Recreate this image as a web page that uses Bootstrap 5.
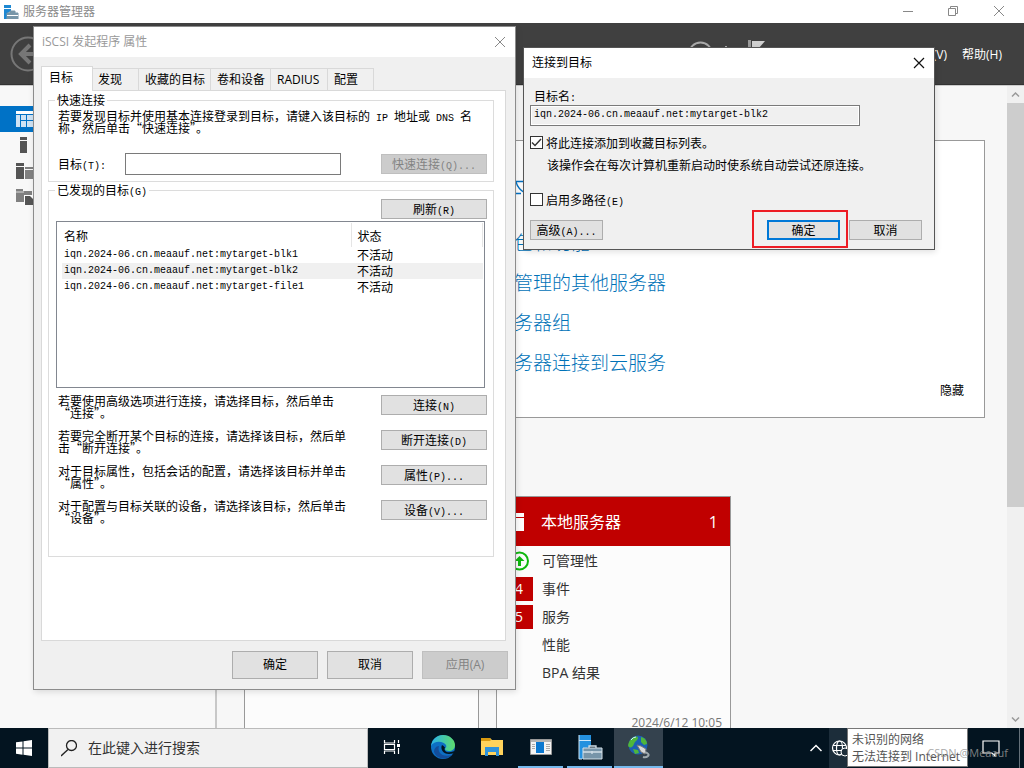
<!DOCTYPE html>
<html lang="zh-CN">
<head>
<meta charset="utf-8">
<meta name="viewport" content="width=device-width, initial-scale=1">
<title>服务器管理器</title>
<link href="https://cdn.jsdelivr.net/npm/bootstrap@5.3.0/dist/css/bootstrap.min.css" rel="stylesheet">
<style>
  body { font: 12px/16px "Open Sans", "Noto Sans CJK SC", sans-serif; color: #000; background: #f7f7f7; }
  .desktop { height: 100vh; min-height: 480px; }
  .song { font-family: "Noto Sans CJK SC", sans-serif; line-height: 12px; }
  .half { font-family: "Liberation Mono", monospace; font-size: 10px; white-space: pre; }
  span.half { line-height: 0; }
  .plain-btn { border: 0; background: none; padding: 0; line-height: 0; color: inherit; }

  /* Server manager window */
  .app-title { height: 23px; background: #fff; color: #8a8a8a; }
  .app-head { height: 62px; background: #404040; color: #fff; border-bottom: 1px solid #333; }
  .app-head a { color: #fff; text-decoration: none; }
  .head-menu { gap: 15px; margin: 2px 22px 0 168px; }
  .app-side { width: 217px; background: #f8f8f8; border-right: 2px solid #c8c8c8; border-top: 1px solid #ccc; padding-top: 20px; }
  .side-item { height: 26px; padding-left: 16px; }
  .side-item.on { background: #0072c6; }
  .app-content { border-top: 1px solid #ccc; padding: 54px 22px 0 27px; background: #f7f7f7; }
  .welcome { border: 1px solid #999; background: #fff; padding: 21px 20px 17px 269px; }
  .welcome a { color: #0072b8; text-decoration: none; font: 300 19px/40px "Noto Sans CJK SC", sans-serif; white-space: nowrap; }
  .welcome a.first { height: 60px; }
  .welcome a.hide-link { font: 12px/16px "Noto Sans CJK SC", sans-serif; color: #000; margin-bottom: 2px; }
  .tiles { margin-top: 78px; gap: 17px; }
  .tile { width: 235px; border: 1px solid #999; border-bottom: 0; background: #fcfcfc; }
  .tile-head { height: 49px; background: #c00000; color: #fff; font-size: 16px; padding: 0 12px 0 11px; gap: 17px; margin-bottom: 1px; }
  .tile-row { height: 28px; font-size: 14px; color: #333; padding-left: 12px; gap: 9px; }
  .tile-mark { width: 24px; height: 24px; color: #fff; text-align: center; line-height: 24px; }
  .tile-mark.red { background: #c00000; }
  .tile-date { color: #777; line-height: 12px; padding: 30px 8px 0; }
  .scroll-bar { width: 17px; background: #f0f0f0; border-top: 1px solid #ccc; }
  .scroll-end { height: 17px; }
  .scroll-thumb { height: 63%; background: #cdcdcd; }

  /* Dialogs */
  .win { position: absolute; background: #f0f0f0; border: 1px solid #8c8c8c; box-shadow: 1px 2px 6px rgba(0,0,0,.12); }
  .win-props { left: 33px; top: 26px; width: 483px; }
  .win-connect { left: 523px; top: 47px; width: 412px; border-color: #555; }
  .win-title { height: 30px; background: #fff; padding: 0 8px; }
  .win-props .win-title { color: #999; }
  .win-btn { height: 20px; border: 1px solid #adadad; background: #e1e1e1; padding: 0 4px; line-height: 12px; color: #000; white-space: nowrap; }
  .win-btn:disabled { background: #ccc; border-color: #bfbfbf; color: #838383; }
  .w-action { width: 106px; flex: none; }
  .w-dialog { width: 73px; }
  .w-main { width: 86px; height: 28px; }
  .tab-strip { padding: 9px 7px 0; }
  .tab-btn { height: 22px; min-width: 46px; border: 1px solid #d9d9d9; border-left: 0; border-bottom: 0; background: #f0f0f0; padding: 0 5px 0 5px; text-align: left; white-space: nowrap; }
  .tab-btn.on { height: 25px; width: 52px; border-left: 1px solid #d9d9d9; background: #fff; margin-bottom: -1px; padding: 0 0 2px 7px; position: relative; }
  .tab-btn.mid { padding-left: 6px; }
  .tab-btn.wide { min-width: 57px; }
  .tab-page { margin: 0 9px 0 7px; border: 1px solid #d9d9d9; background: #fff; padding: 3px 11px 83px 6px; }
  .group { border: 1px solid #dcdcdc; min-width: 0; }
  .group legend { float: none; width: auto; font-size: 12px; line-height: 12px; margin: 0 0 0 -1px; padding: 0 2px; }
  .group-quick { padding: 4px 6px 6px 7px; margin-bottom: 2px; }
  .group-found { padding: 3px 6px 32px 7px; }
  .target-in { width: 216px; height: 22px; border: 1px solid #7a7a7a; background: #fff; border-radius: 0; padding: 0 4px; }
  .target-row { margin-top: 19px; padding-left: 2px; }
  .target-row label { width: 67px; }
  .list-box { border: 1px solid #828790; height: 167px; margin: 2px 2px 7px 0; padding: 1px 1px 0 5px; }
  .list-box table { border-collapse: collapse; width: 100%; table-layout: fixed; }
  .list-box th { font-weight: 400; height: 24px; padding: 2px 2px 0; border-right: 1px solid #e5e5e5; }
  .list-box th:last-child, .list-box td:last-child { padding-left: 6px; }
  .list-box td { height: 16px; padding: 0 2px; line-height: 12px; white-space: nowrap; vertical-align: middle; }
  .list-box .sel td { background: #f0f0f0; }
  .list-box .col-name { width: 289px; }
  .action-row { height: 35px; padding-left: 2px; }
  .action-row.last { height: 24px; }
  .props-foot { padding: 10px 7px 10px; gap: 9px; }
  .connect-body { padding: 12px 12px 9px 6px; }
  .name-in { width: 330px; height: 21px; border: 1px solid #7a7a7a; background: #f0f0f0; border-radius: 0; padding: 0 3px 2px; margin: 3px 0 10px; display: block; outline: 1px solid #fff; outline-offset: -2px; }
  .fav-note { padding: 10px 0 22px 17px; }
  .connect-foot { margin-top: 14px; }
  .ok-wrap { margin-right: 9px; }
  .tick { appearance: none; width: 13px; height: 13px; border: 1px solid #333; background: #fff; margin: 0 3px 0 0; flex: none; }
  .tick:checked { background: #fff url("data:image/svg+xml,%3Csvg xmlns='http://www.w3.org/2000/svg' viewBox='0 0 11 11'%3E%3Cpath d='M1 5.5 4 8.5 10 2' fill='none' stroke='%23333' stroke-width='1.4'/%3E%3C/svg%3E") center/11px; }
  .win-btn.default { border: 2px solid #0078d7; }
  .ring { position: absolute; inset: -10px -8px -8px -15px; border: 2px solid #ed1c24; pointer-events: none; }

  /* Task bar */
  .task-bar { height: 40px; background: #031420; color: #fff; flex: none; position: relative; }
  .start-btn { width: 48px; }
  .search-box { width: 320px; background: #f1f1f1; border: 1px solid #bbb; padding-left: 12px; gap: 11px; }
  .search-box input { border: 0; background: none; font-size: 14px; width: 220px; padding: 0; outline: 0; }
  .search-box input::placeholder { color: #333; opacity: 1; }
  .task-icon { width: 49px; border-bottom: 2px solid transparent; display: flex; align-items: center; justify-content: center; }
  .task-icon.view { width: 47px; margin-right: 3px; }
  .task-icon.run { border-image: linear-gradient(90deg, transparent 4px, #76b9ed 4px 45px, transparent 45px) 2; border-width: 0 0 2px; border-style: solid; }
  .task-icon.now { background: #34424e; border-bottom-color: #76b9ed; }
  .tray-up { padding: 0 7px 0 8px; }
  .tray-net { width: 18px; background: #1c2d3a; overflow: hidden; }
  .net-tip { width: 121px; margin-bottom: 1px; background: #fff; border: 1px solid #777; color: #555; padding: 2px 4px; line-height: 17px; white-space: nowrap; overflow: hidden; }
  .tray-end { width: 56px; padding-left: 14px; }
  .tray-end::after { content: ""; width: 1px; height: 100%; background: #65717a; margin-left: auto; margin-right: 4px; }
  .stamp { position: absolute; right: 16px; bottom: 7px; font: 11px/16px "Open Sans", sans-serif; color: rgba(150,150,150,.85); }
</style>
</head>
<body>
<div class="desktop d-flex flex-column overflow-hidden position-relative">

  <header class="app-title d-flex align-items-center flex-shrink-0">
    <svg class="mx-1" width="15" height="14" viewBox="0 0 15 14"><path d="M0 0h7v3H0zM0 4h7v2L4 8v6H0z" fill="#1e88d2"/><path d="M3 8h11v6H3zM6 8V6h5v2" fill="#7896a8" stroke="#7896a8"/><path d="M3 10.500h11" stroke="#fff"/></svg>
    <span>服务器管理器</span>
    <div class="ms-auto d-flex align-items-center">
      <button class="plain-btn" aria-label="最小化"><svg width="46" height="22" viewBox="0 0 46 22"><path d="M17 10.500h10" stroke="#888"/></svg></button>
      <button class="plain-btn" aria-label="还原"><svg width="46" height="22" viewBox="0 0 46 22"><path d="M16.500 7.500h7v7h-7zM18.500 7V5.500h7v7H24" fill="none" stroke="#888"/></svg></button>
      <button class="plain-btn" aria-label="关闭"><svg width="46" height="22" viewBox="0 0 46 22"><path d="m16 5 10 10M26 5 16 15" stroke="#888"/></svg></button>
    </div>
  </header>

  <nav class="app-head d-flex align-items-center flex-shrink-0" aria-label="主菜单">
    <button class="plain-btn ms-2" aria-label="后退"><svg width="40" height="40" viewBox="0 0 40 40"><circle cx="20" cy="20" r="16.500" fill="none" stroke="#777" stroke-width="2"/><path d="M34 20H13M22 11l-9 9 9 9" fill="none" stroke="#777" stroke-width="4"/></svg></button>
    <svg class="ms-auto" width="80" height="32" viewBox="0 0 80 32"><path d="M4 16a11.500 11.500 0 0 1 23 0" fill="none" stroke="#aaa" stroke-width="2"/><path d="M40 8h2v2h-2z" fill="#aaa"/><path d="M63 2h3v20h-3z" fill="#999"/><path d="M67 3h13l-7 8h-6z" fill="#d0d0d0"/></svg>
    <div class="head-menu d-flex"><a href="#">(V)</a><a href="#">帮助(H)</a></div>
  </nav>

  <div class="d-flex flex-grow-1 overflow-hidden">
    <aside class="app-side flex-shrink-0">
      <div class="side-item on d-flex align-items-center"><svg width="17" height="16" viewBox="0 0 17 16"><path d="M0 0h17v3H0z" fill="#fff"/><path d="M0 4h4v12H0zM5 4h5v5H5zM11 4h6v5h-6zM5 10h5v6H5zM11 10h6v6h-6z" fill="#cfe3f4"/></svg></div>
      <div class="side-item d-flex align-items-center"><svg width="17" height="16" viewBox="0 0 17 16"><path d="M4 0h7v3H4zM4 4h7v12H4z" fill="#555"/></svg></div>
      <div class="side-item d-flex align-items-center"><svg width="17" height="16" viewBox="0 0 17 16"><path d="M0 0h8v3H0zM0 4h8v12H0z" fill="#555"/><path d="M9 4h8v2H9zM9 7h8v9H9z" fill="#808080"/></svg></div>
      <div class="side-item d-flex align-items-center"><svg width="17" height="16" viewBox="0 0 17 16"><path d="M0 0h7v2h9v11H0z" fill="#808080"/><path d="M0 3h8" stroke="#ddd"/><path d="M8 6h9v10H8z" fill="#fff"/><path d="M9 7h5l3 3v6H9z" fill="#555"/></svg></div>
    </aside>

    <main class="app-content flex-grow-1">
      <section class="welcome d-flex flex-column align-items-start">
        <a class="first" href="#" aria-label="配置此本地服务器"><svg width="12" height="30" viewBox="0 0 12 30"><path d="M0 11.500h10M0 23.500h7M2 12q2 7 9 11" fill="none" stroke="#0072c6" stroke-width="1.300"/></svg></a>
        <a href="#">色和功能</a>
        <a href="#">管理的其他服务器</a>
        <a href="#">务器组</a>
        <a href="#">务器连接到云服务</a>
        <a class="hide-link align-self-end" href="#">隐藏</a>
      </section>
      <section class="tiles d-flex">
        <div class="tile"></div>
        <div class="tile">
          <div class="tile-head d-flex align-items-center">
            <svg width="16" height="18" viewBox="0 0 16 18"><path d="M0 0h16v4H0zM0 5h16v13H0z" fill="#fff"/></svg>
            <span>本地服务器</span><span class="ms-auto">1</span>
          </div>
          <div class="tile-row d-flex align-items-center"><svg width="24" height="24" viewBox="0 0 24 24"><circle cx="10.500" cy="12" r="8.500" fill="none" stroke="#0fb80f" stroke-width="2"/><path d="M10.500 7l5 5H12v5H9v-5H5.500z" fill="#0fb80f"/></svg><span>可管理性</span></div>
          <div class="tile-row d-flex align-items-center"><span class="tile-mark red pe-1">4</span><span>事件</span></div>
          <div class="tile-row d-flex align-items-center"><span class="tile-mark red pe-1">5</span><span>服务</span></div>
          <div class="tile-row d-flex align-items-center"><span class="tile-mark"></span><span>性能</span></div>
          <div class="tile-row d-flex align-items-center"><span class="tile-mark"></span><span>BPA 结果</span></div>
          <div class="tile-date text-end">2024/6/12 10:05</div>
        </div>
      </section>
    </main>

    <div class="scroll-bar d-flex flex-column flex-shrink-0">
      <svg class="scroll-end" width="17" viewBox="0 0 17 17"><path d="m5 10.500 3.500-3.500 3.500 3.500" fill="none" stroke="#999" stroke-width="1.500"/></svg>
      <div class="scroll-thumb"></div>
      <svg class="scroll-end mt-auto" width="17" viewBox="0 0 17 17"><path d="m5 6.500 3.500 3.500 3.500-3.500" fill="none" stroke="#999" stroke-width="1.500"/></svg>
    </div>
  </div>

  <footer class="task-bar d-flex align-items-stretch">
    <button class="plain-btn start-btn" aria-label="开始"><svg width="16" height="16" viewBox="0 0 16 16"><path d="M0 2.300 6.500 1.400v6.200H0zM7.500 1.200 16 0v7.600H7.500zM0 8.500h6.500v6.200L0 13.800zM7.500 8.500H16V16l-8.500-1.200z" fill="#fff"/></svg></button>
    <label class="search-box d-flex align-items-center">
      <svg width="16" height="17" viewBox="0 0 16 17"><circle cx="10.500" cy="5.500" r="5" fill="none" stroke="#222" stroke-width="1.300"/><path d="M7 9.500 0 16" stroke="#222" stroke-width="1.300"/></svg>
      <input type="search" placeholder="在此键入进行搜索" aria-label="搜索">
    </label>
    <button class="plain-btn task-icon view" aria-label="任务视图"><svg width="18" height="18" viewBox="0 0 18 18"><path d="M1.500 2v3h10V2M1.500 16v-3h10v3M1.500 6.500h10v5h-10zM15.500 2v3M15.500 10v6" fill="none" stroke="#fff" stroke-width="1.200"/><path d="M14 6h3v3h-3z" fill="#fff"/></svg></button>
    <button class="plain-btn task-icon" aria-label="Edge"><svg width="26" height="26" viewBox="0 0 26 26"><defs><linearGradient id="eg" x1="0" x2="1"><stop offset="0" stop-color="#2bb3ea"/><stop offset="1" stop-color="#5ddb6c"/></linearGradient></defs><circle cx="13" cy="13" r="12" fill="#0d6fc4"/><path d="M1 12C2 5 7 1 13 1c7 0 12 5 12 10 0 4-3 6-6 6-2 0-4-1-4-2 0-1 2-1 1-4C14 7 4 6 1 12z" fill="url(#eg)"/><path d="M9 12c-2 6 3 12 13 9-5 5-15 5-18-3 0-3 2-6 5-6z" fill="#134d9a"/><path d="M12 11c-2 4 1 9 7 9 3 0 5-1 6-2 0-1-1-1-2-.5-5 2-10 0-8-4-1-1-2-2-3-2.500z" fill="#031420"/></svg></button>
    <button class="plain-btn task-icon" aria-label="文件资源管理器"><svg width="22" height="20" viewBox="0 0 22 20"><path d="M0 1h9l2 2h11v15H0z" fill="#ffd35c"/><path d="M0 1h9l1 2-1 1H0z" fill="#d99a10"/><path d="M4 10h14v9h-3v-4H7v4H4z" fill="#2f93db"/></svg></button>
    <button class="plain-btn task-icon run" aria-label="控制台"><svg width="22" height="18" viewBox="0 0 22 18"><path d="M.5 1.500h21v15H.5z" fill="#f4f4f4" stroke="#999"/><path d="M1 2h20v2H1z" fill="#b5b5b5"/><path d="M6 4h8v11H6z" fill="#0b78d0"/><path d="M2 6.500h3M2 8.500h3M2 10.500h3M16 6.500h4M16 8.500h4M16 10.500h4M16 12.500h4" stroke="#aaa"/></svg></button>
    <button class="plain-btn task-icon run" aria-label="服务器管理器"><svg width="26" height="26" viewBox="0 0 26 26"><path d="M2 1h12v5H2zM2 7h12v5l-8 4v9H2z" fill="#2491df"/><path d="M2 6.500h12M2 1v24h3" stroke="#cde8fa" fill="none"/><path d="M6 14h19v11H6z" fill="#7795a9" stroke="#d4e0e8"/><path d="M12 14v-2h7v2M6 18h19M15 17v3" fill="none" stroke="#d4e0e8" stroke-width="1.300"/></svg></button>
    <button class="plain-btn task-icon now" aria-label="iSCSI 发起程序"><svg width="24" height="24" viewBox="0 0 24 24"><circle cx="11" cy="10" r="9.500" fill="#1d5fb4"/><path d="M4 4c3-3 7-3 7-1S8 6 7 9s-3 4-5 3 0-6 2-8zM14 2c4 1 6 4 6 7l-3 1-3-3zM6 14l5 1 1 3-4 1z" fill="#4fb63b"/><path d="M4 5q2-3 5-3" stroke="#cdeaff" fill="none"/><path d="m10 10 4 1 5 3-1 5-4-2z" fill="#d9d9d9" stroke="#777"/><path d="M18 17q5 2 3 4-2 2-5 1" fill="none" stroke="#9fa9ae" stroke-width="2"/></svg></button>

    <div class="ms-auto d-flex align-items-stretch">
      <button class="plain-btn tray-up" aria-label="显示隐藏的图标"><svg width="12" height="8" viewBox="0 0 12 8"><path d="m.5 7 5.500-5.500L11.500 7" fill="none" stroke="#fff" stroke-width="1.500"/></svg></button>
      <button class="plain-btn tray-net" aria-label="网络"><svg width="18" height="18" viewBox="0 0 18 18"><g fill="none" stroke="#fff" stroke-width="1.200"><circle cx="10.500" cy="9" r="7"/><ellipse cx="10.500" cy="9" rx="3" ry="7"/><path d="M4 6.500h13M4 11.500h13"/></g><circle cx="16" cy="13" r="4" fill="#1c2d3a" stroke="#fff"/></svg></button>
      <div class="net-tip" role="status">未识别的网络<br>无法连接到 Internet</div>
      <div class="tray-end d-flex align-items-center"><svg width="18" height="18" viewBox="0 0 18 18"><path d="M1 2h16v12h-4v3l-3-3H1z" fill="none" stroke="#fff" stroke-width="1.200"/></svg></div>
    </div>
    <span class="stamp">CSDN @Meaauf</span>
  </footer>

  <!-- iSCSI initiator properties -->
  <section class="win win-props" role="dialog" aria-label="iSCSI 发起程序 属性">
    <div class="win-title d-flex align-items-center">
      <span>iSCSI 发起程序 属性</span>
      <button class="plain-btn ms-auto" aria-label="关闭"><svg width="14" height="14" viewBox="0 0 14 14"><path d="m2 2 10 10M12 2 2 12" stroke="#888"/></svg></button>
    </div>
    <div class="tab-strip d-flex align-items-end" role="tablist">
      <button class="tab-btn on" role="tab">目标</button><button class="tab-btn" role="tab">发现</button><button class="tab-btn mid" role="tab">收藏的目标</button><button class="tab-btn mid" role="tab">卷和设备</button><button class="tab-btn mid wide" role="tab">RADIUS</button><button class="tab-btn mid" role="tab">配置</button>
    </div>
    <div class="tab-page song">
      <fieldset class="group group-quick">
        <legend>快速连接</legend>
        <div class="text-nowrap" style="padding-left: 2px">若要发现目标并使用基本连接登录到目标，请键入该目标的<span class="half"> IP </span>地址或<span class="half"> DNS </span>名<br>称，然后单击“快速连接”。</div>
        <div class="target-row d-flex align-items-center">
          <label for="target">目标<span class="half">(T):</span></label>
          <input id="target" class="target-in" type="text">
          <button class="win-btn w-action ms-auto" disabled>快速连接<span class="half">(Q)...</span></button>
        </div>
      </fieldset>
      <fieldset class="group group-found">
        <legend>已发现的目标<span class="half">(G)</span></legend>
        <div class="d-flex justify-content-end"><button class="win-btn w-action">刷新<span class="half">(R)</span></button></div>
        <div class="list-box">
          <table>
            <thead><tr><th class="col-name">名称</th><th>状态</th></tr></thead>
            <tbody>
              <tr><td class="half">iqn.2024-06.cn.meaauf.net:mytarget-blk1</td><td>不活动</td></tr>
              <tr class="sel"><td class="half">iqn.2024-06.cn.meaauf.net:mytarget-blk2</td><td>不活动</td></tr>
              <tr><td class="half">iqn.2024-06.cn.meaauf.net:mytarget-file1</td><td>不活动</td></tr>
            </tbody>
          </table>
        </div>
        <div class="action-row d-flex align-items-start justify-content-between"><span>若要使用高级选项进行连接，请选择目标，然后单击<br>“连接”。</span><button class="win-btn w-action">连接<span class="half">(N)</span></button></div>
        <div class="action-row d-flex align-items-start justify-content-between"><span>若要完全断开某个目标的连接，请选择该目标，然后单<br>击“断开连接”。</span><button class="win-btn w-action">断开连接<span class="half">(D)</span></button></div>
        <div class="action-row d-flex align-items-start justify-content-between"><span>对于目标属性，包括会话的配置，请选择该目标并单击<br>“属性”。</span><button class="win-btn w-action">属性<span class="half">(P)...</span></button></div>
        <div class="action-row last d-flex align-items-start justify-content-between"><span>对于配置与目标关联的设备，请选择该目标，然后单击<br>“设备”。</span><button class="win-btn w-action">设备<span class="half">(V)...</span></button></div>
      </fieldset>
    </div>
    <div class="props-foot d-flex justify-content-end">
      <button class="win-btn w-main">确定</button><button class="win-btn w-main">取消</button><button class="win-btn w-main" disabled>应用(A)</button>
    </div>
  </section>

  <!-- Connect to target -->
  <section class="win win-connect" role="dialog" aria-label="连接到目标">
    <div class="win-title d-flex align-items-center">
      <span>连接到目标</span>
      <button class="plain-btn ms-auto" aria-label="关闭"><svg width="14" height="14" viewBox="0 0 14 14"><path d="m2 2 10 10M12 2 2 12" stroke="#111" stroke-width="1.200"/></svg></button>
    </div>
    <div class="connect-body song">
      <label for="tname" class="d-block ps-1">目标名<span class="half">:</span></label>
      <input id="tname" class="name-in half" type="text" readonly value="iqn.2024-06.cn.meaauf.net:mytarget-blk2">
      <div class="d-flex align-items-center"><input class="tick" type="checkbox" id="fav" checked><label for="fav">将此连接添加到收藏目标列表。</label></div>
      <div class="fav-note">该操作会在每次计算机重新启动时使系统自动尝试还原连接。</div>
      <div class="d-flex align-items-center"><input class="tick" type="checkbox" id="multi"><label for="multi">启用多路径<span class="half">(E)</span></label></div>
      <div class="connect-foot d-flex">
        <button class="win-btn w-dialog">高级<span class="half">(A)...</span></button>
        <span class="ok-wrap d-flex position-relative ms-auto"><button class="win-btn w-dialog default">确定</button><span class="ring"></span></span>
        <button class="win-btn w-dialog">取消</button>
      </div>
    </div>
  </section>
</div>
<script src="https://cdn.jsdelivr.net/npm/bootstrap@5.3.0/dist/js/bootstrap.bundle.min.js"></script>
</body>
</html>
